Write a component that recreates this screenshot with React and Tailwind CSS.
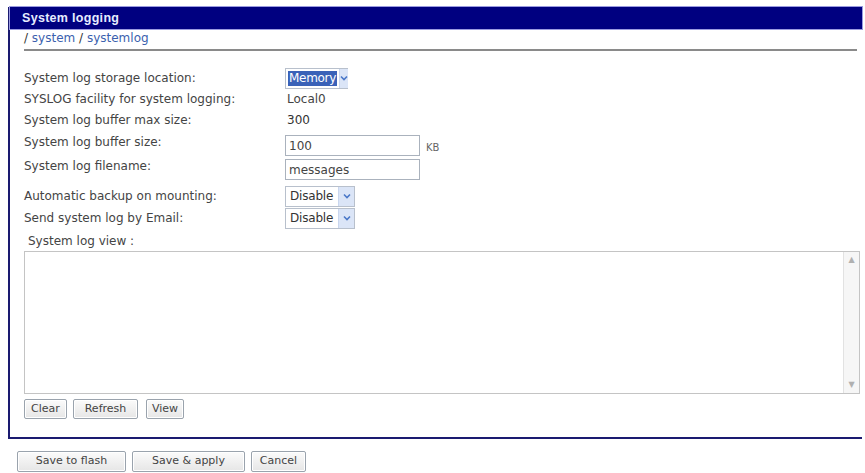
import React from "react";

const F = { fontFamily: '"DejaVu Sans", Verdana, sans-serif' };

function Chevron() {
  return (
    <svg width="8" height="6" viewBox="0 0 8 6">
      <path d="M1 1.5 L4 4.5 L7 1.5" fill="none" stroke="#4a78c8" strokeWidth="1.6" />
    </svg>
  );
}

function Select({ value, selected, w }) {
  return (
    <div className={`flex h-[21px] items-stretch border border-[#b8c0cc] bg-white ${w}`}>
      <div className="flex flex-1 items-center px-[2px]">
        <span
          className={
            selected
              ? "bg-[#3a62b8] px-[1px] text-[12px] leading-[15px] tracking-[-0.3px] text-white"
              : "px-[2px] text-[12px] leading-[15px] tracking-[-0.2px] text-[#333]"
          }
        >
          {value}
        </span>
      </div>
      <div className="flex w-[16px] items-center justify-center border-l border-[#c9d6ee] bg-[#dbe5f7]">
        <Chevron />
      </div>
    </div>
  );
}

function Btn({ children, w }) {
  return (
    <button
      className={`flex h-[20px] items-center justify-center rounded-[2px] border border-[#9aa3ad] bg-gradient-to-b from-[#fbfbfb] to-[#e6e6e6] text-[11px] text-[#444] shadow-[inset_0_0_0_1px_#fff] ${w}`}
    >
      {children}
    </button>
  );
}

function Row({ label, children, h, mt, align = "items-center" }) {
  return (
    <div className={`flex ${align} ${h} ${mt}`}>
      <div className="w-[261px] text-[12px] leading-[14px] text-[#444]">{label}</div>
      <div className="flex items-center">{children}</div>
    </div>
  );
}

export default function App() {
  return (
    <div className="h-[473px] w-[865px] bg-white" style={F}>
      <div className="pt-[7px] pl-[8px] pr-[3px]">
        <div className="border-b-2 border-l-2 border-[#1a1a70]">
          <div
            className="flex h-[22px] items-center bg-[#000080] pl-[12px] text-[12px] font-bold tracking-[0.3px] text-[#e6ecff] outline outline-1 outline-[#9b9be0]"
            style={{ fontFamily: '"Liberation Sans", Arial, sans-serif', fontSize: "12.5px" }}
          >
            System logging
          </div>
          <div className="pl-[14px] pr-[5px]">
            <div className="flex h-[22px] items-end border-b-2 border-[#8a8a8a] pb-[4px] text-[12px] leading-[14px] text-[#3b5fae]">
              <span className="text-[#333]">/</span>&nbsp;system&nbsp;
              <span className="text-[#333]">/</span>&nbsp;systemlog
            </div>
          </div>
          <div className="pl-[14px] pr-[2px] pt-[17px]">
            <Row label="System log storage location:" h="h-[20px]">
              <Select value="Memory" selected w="w-[63px]" />
            </Row>
            <Row label="SYSLOG facility for system logging:" h="h-[21px]">
              <span className="pl-[2px] text-[12px] text-[#444]">Local0</span>
            </Row>
            <Row label="System log buffer max size:" h="h-[21px]">
              <span className="pl-[2px] text-[12px] text-[#333]">300</span>
            </Row>
            <Row label="System log buffer size:" h="h-[22px]" mt="mt-[5px]" align="items-start">
              <div className="flex h-[21px] w-[135px] items-center border border-[#aab2bd] bg-white px-[3px] text-[12px] text-[#444]">
                100
              </div>
              <span className="ml-[6px] mt-[4px] text-[10px] text-[#666]">KB</span>
            </Row>
            <Row label="System log filename:" h="h-[22px]" mt="mt-[2px]" align="items-start">
              <div className="flex h-[21px] w-[135px] items-center border border-[#aab2bd] bg-white px-[3px] text-[12px] text-[#444]">
                messages
              </div>
            </Row>
            <Row label="Automatic backup on mounting:" h="h-[22px]" mt="mt-[4px]">
              <Select value="Disable" w="w-[70px]" />
            </Row>
            <Row label="Send system log by Email:" h="h-[22px]">
              <Select value="Disable" w="w-[70px]" />
            </Row>
            <div className="mt-[5px] h-[14px] pl-[4px] text-[12px] leading-[14px] text-[#444]">
              System log view :
            </div>
            <div className="mt-[3px] flex h-[143px] border border-[#c4c4c4] bg-white">
              <div className="flex-1" />
              <div className="flex w-[16px] flex-col justify-between border-l border-[#e2e2e2] bg-[#f6f6f6]">
                <div className="flex h-[16px] items-center justify-center text-[8px] text-[#b0b0b0]">▲</div>
                <div className="flex h-[16px] items-center justify-center text-[8px] text-[#b0b0b0]">▼</div>
              </div>
            </div>
            <div className="mt-[5px] flex gap-[6px]">
              <Btn w="w-[43px]">Clear</Btn>
              <Btn w="w-[65px]">Refresh</Btn>
              <Btn w="w-[38px] ml-[2px]">View</Btn>
            </div>
            <div className="h-[18px]" />
          </div>
        </div>
      </div>
      <div className="mt-[12px] flex gap-[6px] pl-[17px]">
        <Btn w="w-[109px] h-[21px]">Save to flash</Btn>
        <Btn w="w-[113px] h-[21px]">Save &amp; apply</Btn>
        <Btn w="w-[55px] h-[21px]">Cancel</Btn>
      </div>
    </div>
  );
}
